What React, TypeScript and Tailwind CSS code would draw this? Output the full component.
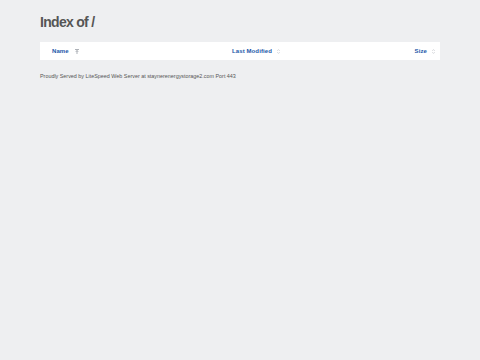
export default function App() {
  return (
    <div className="min-h-[360px] bg-[#eeeff1] px-10 pt-[13px] font-['Liberation_Sans',Arial,sans-serif]">
      <h1 className="text-[14px] leading-[18px] font-bold tracking-[-0.7px] text-[#555]">Index of /</h1>
      <div className="mt-[11px] flex h-[18px] items-center bg-white pr-[5px] text-[6px] font-bold tracking-[0.1px] text-[#2257a8]">
        <div className="flex w-[192px] items-center pl-[12px] pt-px">
          Name
          <svg className="ml-[6px]" width="4" height="5" viewBox="0 0 4 5">
            <path d="M0 0.5H4M2 1.5V5M0.8 2.8L2 1.5L3.2 2.8" stroke="#8a8f98" strokeWidth="0.7" fill="none" />
          </svg>
        </div>
        <div className="flex flex-1 items-center pt-px">
          Last Modified
          <svg className="ml-[5px]" width="3" height="5" viewBox="0 0 3 5">
            <path d="M0.3 1.8L1.5 0.6L2.7 1.8M0.3 3.2L1.5 4.4L2.7 3.2" stroke="#b5b9c0" strokeWidth="0.6" fill="none" />
          </svg>
        </div>
        <div className="flex items-center pt-px">
          Size
          <svg className="ml-[5px]" width="3" height="5" viewBox="0 0 3 5">
            <path d="M0.3 1.8L1.5 0.6L2.7 1.8M0.3 3.2L1.5 4.4L2.7 3.2" stroke="#b5b9c0" strokeWidth="0.6" fill="none" />
          </svg>
        </div>
      </div>
      <p className="mt-[13px] text-[5.4px] leading-[7px] text-[#555]">
        Proudly Served by LiteSpeed Web Server at staynerenergystorage2.com Port 443
      </p>
    </div>
  );
}
